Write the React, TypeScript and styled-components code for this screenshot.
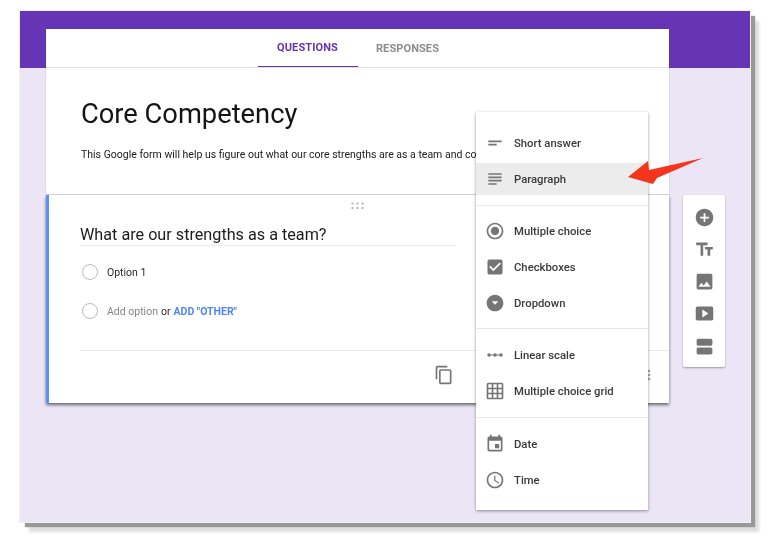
import React from 'react'
import styled, { createGlobalStyle } from 'styled-components'
import {
  MdAccessTime,
  MdAddCircle,
  MdArrowDropDownCircle,
  MdCheckBox,
  MdContentCopy,
  MdEvent,
  MdGridOn,
  MdImage,
  MdMoreVert,
  MdRadioButtonChecked,
  MdShortText,
  MdSmartDisplay,
  MdSubject,
  MdTextFields,
  MdViewAgenda,
} from 'react-icons/md'

const GlobalStyle = createGlobalStyle`
  html, body {
    margin: 0;
    background: #fff;
    font-family: Roboto, "Liberation Sans", sans-serif;
  }
`

const Page = styled.div`
  width: 770px;
  height: 545px;
  padding: 11px 20px 0;
  box-sizing: border-box;
  overflow: hidden;
  filter: blur(0.35px);
`

const Frame = styled.div`
  position: relative;
  width: 730px;
  height: 511px;
  padding: 18px 25px 0 26px;
  box-sizing: border-box;
  display: flex;
  align-items: flex-start;
  gap: 14px;
  background: linear-gradient(#6535b5 0 57px, #ebe5f6 57px);
  box-shadow: 0 0 0 1px #f1f1f1, 5px 5px 1px #999, 9px 10px 3px #dedede;
`

const Column = styled.div`
  width: 623px;
  flex: none;
`

const HeaderCard = styled.div`
  height: 166px;
  box-sizing: border-box;
  background: #fff;
  border-bottom: 1px solid #d6d4de;
  box-shadow: 0 0 1px rgba(0, 0, 0, 0.3);
`

const Tabs = styled.div`
  height: 38px;
  display: flex;
  justify-content: center;
  border-bottom: 1px solid #e2e0e8;
`

const Tab = styled.div<{ $active?: boolean }>`
  width: 100px;
  height: 38px;
  box-sizing: border-box;
  display: flex;
  align-items: center;
  justify-content: center;
  font-size: 11px;
  font-weight: 700;
  letter-spacing: 0.1px;
  color: ${({ $active }) => ($active ? '#6535b5' : '#8c8c8c')};
  border-bottom: ${({ $active }) => ($active ? '1px solid #6535b5' : 'none')};
`

const FormInfo = styled.div`
  padding: 28px 0 0 35px;
`

const Title = styled.h1`
  margin: 0;
  font-size: 27.3px;
  line-height: 36px;
  font-weight: 400;
  color: #141414;
`

const Description = styled.p`
  margin: 16px 0 0;
  font-size: 10.5px;
  line-height: 14px;
  color: #202020;
  white-space: nowrap;
`

const QuestionCard = styled.div`
  height: 208px;
  box-sizing: border-box;
  padding: 7px 0 0 31px;
  background: #fff;
  border-left: 3px solid #5b8ff9;
  box-shadow: 0 2px 3px rgba(0, 0, 0, 0.55);
`

const DragHandle = styled.svg`
  display: block;
  margin: 0 auto;
  transform: translateX(-17px);
`

const QuestionTitle = styled.div`
  width: 376px;
  height: 23px;
  margin-top: 13px;
  font-size: 16.2px;
  line-height: 24px;
  color: #1c1c1c;
  border-bottom: 1px solid #ececec;
  box-sizing: border-box;
`

const OptionRow = styled.div<{ $gap: number }>`
  display: flex;
  align-items: center;
  gap: 9px;
  height: 20px;
  margin-top: ${({ $gap }) => $gap}px;
  padding-left: 2px;
  font-size: 10.5px;
  color: #2a2a2a;
`

const Radio = styled.span`
  width: 16px;
  height: 16px;
  box-sizing: border-box;
  border: 1.5px solid #bbb;
  border-radius: 50%;
`

const Muted = styled.span`
  color: #858585;
`

const AddOther = styled.span`
  color: #4f86f7;
  font-weight: 700;
`

const OptionText = styled.span`
  display: flex;
  gap: 3px;
`

const Footer = styled.div`
  margin-top: 29px;
  height: 48px;
  display: flex;
  align-items: center;
  justify-content: flex-end;
  gap: 187px;
  padding-right: 12px;
  color: #757575;
  border-top: 1px solid #ececec;
`

const MoreButton = styled.span`
  display: flex;
  color: #a8a8a8;
  font-size: 16px;
`

const Toolbar = styled.div`
  width: 42px;
  height: 172px;
  margin-top: 166px;
  padding: 6px 0;
  box-sizing: border-box;
  flex: none;
  display: flex;
  flex-direction: column;
  align-items: center;
  background: #fff;
  border-radius: 2px;
  box-shadow: 0 1px 2px rgba(0, 0, 0, 0.35);
`

const ToolButton = styled.div`
  height: 32.25px;
  flex: none;
  display: flex;
  align-items: center;
  color: #757575;
  font-size: 21px;
`

const Menu = styled.div`
  position: absolute;
  left: 456px;
  top: 101px;
  width: 172px;
  height: 398px;
  box-sizing: border-box;
  background: #fff;
  box-shadow: 0 1px 3px rgba(0, 0, 0, 0.4);
`

const MenuGroup = styled.div<{ $top: number; $bottom: number; $last?: boolean }>`
  display: flex;
  flex-direction: column;
  gap: 4px;
  padding: ${({ $top, $bottom }) => `${$top}px 0 ${$bottom}px`};
  border-bottom: ${({ $last }) => ($last ? 'none' : '1px solid #e8e8e8')};
`

const MenuItem = styled.div<{ $selected?: boolean }>`
  height: 32px;
  display: flex;
  align-items: center;
  padding-left: 7px;
  gap: 8px;
  font-size: 11.3px;
  font-weight: 500;
  color: #3a3a3a;
  background: ${({ $selected }) => ($selected ? '#ececec' : 'transparent')};
`

const MenuIcon = styled.span`
  width: 23px;
  display: flex;
  justify-content: center;
  color: #757575;
  font-size: 20px;
`

const Arrow = styled.svg`
  position: absolute;
  left: 605px;
  top: 145px;
`

const LinearScaleIcon = () => (
  <svg width="16" height="20" viewBox="0 0 16 20" fill="currentColor">
    <rect x="1" y="9.5" width="14" height="1" />
    <circle cx="2" cy="10" r="1.7" />
    <circle cx="8" cy="10" r="1.7" />
    <circle cx="14" cy="10" r="1.7" />
  </svg>
)

const menuGroups = [
  {
    top: 15,
    bottom: 10,
    items: [
      { label: 'Short answer', icon: <MdShortText /> },
      { label: 'Paragraph', icon: <MdSubject />, selected: true },
    ],
  },
  {
    top: 9,
    bottom: 9,
    items: [
      { label: 'Multiple choice', icon: <MdRadioButtonChecked /> },
      { label: 'Checkboxes', icon: <MdCheckBox /> },
      { label: 'Dropdown', icon: <MdArrowDropDownCircle /> },
    ],
  },
  {
    top: 10,
    bottom: 10,
    items: [
      { label: 'Linear scale', icon: <LinearScaleIcon /> },
      { label: 'Multiple choice grid', icon: <MdGridOn /> },
    ],
  },
  {
    top: 10,
    bottom: 14,
    items: [
      { label: 'Date', icon: <MdEvent /> },
      { label: 'Time', icon: <MdAccessTime /> },
    ],
  },
]

export default function App() {
  return (
    <>
      <GlobalStyle />
      <Page>
        <Frame>
          <Column>
            <HeaderCard>
              <Tabs>
                <Tab $active>QUESTIONS</Tab>
                <Tab>RESPONSES</Tab>
              </Tabs>
              <FormInfo>
                <Title>Core Competency</Title>
                <Description>
                  This Google form will help us figure out what our core strengths are as a team and core competencies.
                </Description>
              </FormInfo>
            </HeaderCard>

            <QuestionCard>
              <DragHandle width="14" height="8" viewBox="0 0 14 8" fill="#b5b5b5">
                {[1.5, 6.5, 11.5].map((x) =>
                  [1.5, 6].map((y) => <rect key={`${x}-${y}`} x={x - 1} y={y - 1} width="2" height="2" />)
                )}
              </DragHandle>
              <QuestionTitle>What are our strengths as a team?</QuestionTitle>
              <OptionRow $gap={16}>
                <Radio />
                <span>Option 1</span>
              </OptionRow>
              <OptionRow $gap={19}>
                <Radio />
                <OptionText>
                  <Muted>Add option</Muted> or <AddOther>ADD "OTHER"</AddOther>
                </OptionText>
              </OptionRow>
              <Footer>
                <MdContentCopy size={20} />
                <MoreButton><MdMoreVert /></MoreButton>
              </Footer>
            </QuestionCard>
          </Column>

          <Toolbar>
            <ToolButton><MdAddCircle /></ToolButton>
            <ToolButton><MdTextFields /></ToolButton>
            <ToolButton><MdImage /></ToolButton>
            <ToolButton><MdSmartDisplay /></ToolButton>
            <ToolButton><MdViewAgenda /></ToolButton>
          </Toolbar>

          <Menu>
            {menuGroups.map((group, index) => (
              <MenuGroup key={index} $top={group.top} $bottom={group.bottom} $last={index === menuGroups.length - 1}>
                {group.items.map((item) => (
                  <MenuItem key={item.label} $selected={item.selected}>
                    <MenuIcon>{item.icon}</MenuIcon>
                    {item.label}
                  </MenuItem>
                ))}
              </MenuGroup>
            ))}
          </Menu>

          <Arrow width="80" height="32" viewBox="0 0 80 32">
            <polygon points="3,21 23,5 24,14 78,2 32,22 28,28" fill="#f4351e" />
          </Arrow>
        </Frame>
      </Page>
    </>
  )
}
